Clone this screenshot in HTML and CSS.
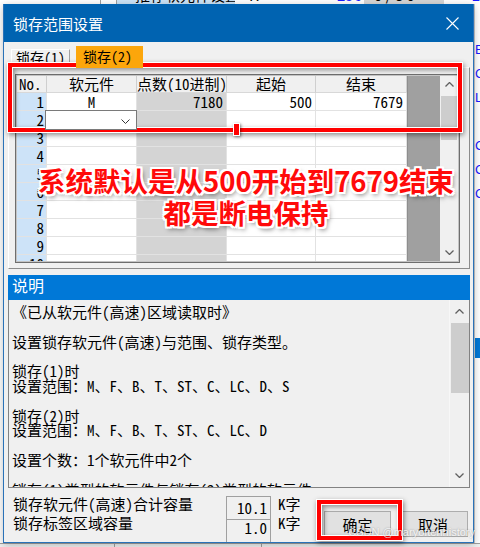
FILE: index.html
```html
<!DOCTYPE html>
<html lang="zh-CN">
<head>
    <meta charset="UTF-8">
    <title>锁存范围设置</title>
    <link rel="stylesheet" href="styles.css">
</head>
<body>
<div class="screen">
    <!-- Application behind the dialog -->
    <div class="app">
        <div class="app-top">
            <div class="cell c1"></div>
            <div class="cell c2"></div>
            <div class="cell c3">推荐软元件设置</div>
            <div class="cell c4">K</div>
            <div class="cell c5">256</div>
            <div class="cell c6">0 / 8 0</div>
            <div class="cell c7">E</div>
        </div>
        <div class="app-main">
            <div class="app-left"></div>
            <div class="app-right">
                <div class="frag">E</div>
                <div class="frag">C</div>
                <div class="frag">L</div>
                <div class="frag"></div>
                <div class="frag">C</div>
                <div class="frag">C</div>
                <div class="frag">C</div>
                <div class="app-bar"></div>
            </div>
        </div>
        <div class="app-bottom">
            <div class="cell b1"></div>
            <div class="cell b2">检索(K)</div>
            <div class="cell b3">顺序检索(H)</div>
        </div>
    </div>

    <!-- Dialog -->
    <div class="dialog">
        <div class="titlebar">
            <span class="title">锁存范围设置</span>
            <span class="close">
                <svg width="13" height="13" viewBox="0 0 13 13"><path d="M0.5 0.5 L12.5 12.5 M12.5 0.5 L0.5 12.5" stroke="#fff" stroke-width="1.1" fill="none"/></svg>
            </span>
        </div>

        <div class="dialog-body">
            <div class="tabs">
                <div class="tab">锁存(1)</div>
                <div class="tab active">锁存(2)</div>
            </div>

            <div class="panel">
                <div class="grid">
                    <div class="sheet">
                        <div class="c h hno">No.</div>
                        <div class="c h">软元件</div>
                        <div class="c h">点数(10进制)</div>
                        <div class="c h">起始</div>
                        <div class="c h">结束</div>

                        <div class="c n">1</div>
                        <div class="c ctr">M</div>
                        <div class="c g r">7180</div>
                        <div class="c r">500</div>
                        <div class="c r">7679</div>

                        <div class="c n">2</div>
                        <div class="c edit">
                            <div class="combo">
                                <svg width="9" height="5" viewBox="0 0 9 5"><path d="M0.5 0.5 L4.5 4.5 L8.5 0.5" stroke="#333" stroke-width="1" fill="none"/></svg>
                            </div>
                        </div>
                        <div class="c g"></div><div class="c"></div><div class="c"></div>

                        <div class="c n">3</div><div class="c"></div><div class="c g"></div><div class="c"></div><div class="c"></div>
                        <div class="c n">4</div><div class="c"></div><div class="c g"></div><div class="c"></div><div class="c"></div>
                        <div class="c n">5</div><div class="c"></div><div class="c g"></div><div class="c"></div><div class="c"></div>
                        <div class="c n">6</div><div class="c"></div><div class="c g"></div><div class="c"></div><div class="c"></div>
                        <div class="c n">7</div><div class="c"></div><div class="c g"></div><div class="c"></div><div class="c"></div>
                        <div class="c n">8</div><div class="c"></div><div class="c g"></div><div class="c"></div><div class="c"></div>
                        <div class="c n">9</div><div class="c"></div><div class="c g"></div><div class="c"></div><div class="c"></div>
                        <div class="c n">10</div><div class="c"></div><div class="c g"></div><div class="c"></div><div class="c"></div>
                    </div>
                    <div class="dark-col"></div>
                    <div class="vscroll">
                        <div class="arrow">
                            <svg width="9" height="5" viewBox="0 0 9 5"><path d="M0.5 4.5 L4.5 0.5 L8.5 4.5" stroke="#606060" stroke-width="1.3" fill="none"/></svg>
                        </div>
                        <div class="thumb"></div>
                        <div class="track"></div>
                        <div class="arrow">
                            <svg width="9" height="5" viewBox="0 0 9 5"><path d="M0.5 0.5 L4.5 4.5 L8.5 0.5" stroke="#606060" stroke-width="1.3" fill="none"/></svg>
                        </div>
                    </div>
                </div>
            </div>

            <!-- Description -->
            <div class="desc-head">说明</div>
            <div class="desc-box">
                <div class="desc-text">《已从软元件(高速)区域读取时》

设置锁存软元件(高速)与范围、锁存类型。

锁存(1)时
设置范围：M、F、B、T、ST、C、LC、D、S

锁存(2)时
设置范围：M、F、B、T、ST、C、LC、D

设置个数：1个软元件中2个

锁存(1)类型的软元件与锁存(2)类型的软元件</div>
                <div class="vscroll wide">
                    <div class="arrow tall">
                        <svg width="9" height="5" viewBox="0 0 9 5"><path d="M0.5 4.5 L4.5 0.5 L8.5 4.5" stroke="#606060" stroke-width="1.3" fill="none"/></svg>
                    </div>
                    <div class="thumb long"></div>
                    <div class="track"></div>
                    <div class="arrow tall">
                        <svg width="9" height="5" viewBox="0 0 9 5"><path d="M0.5 0.5 L4.5 4.5 L8.5 0.5" stroke="#606060" stroke-width="1.3" fill="none"/></svg>
                    </div>
                </div>
            </div>

            <!-- Capacity and buttons -->
            <div class="footer">
                <div class="cap-labels">
                    <div>锁存软元件(高速)合计容量</div>
                    <div>锁存标签区域容量</div>
                </div>
                <div class="cap-box">
                    <div class="cap-v first">10.1</div>
                    <div class="cap-v">1.0</div>
                </div>
                <div class="cap-unit">
                    <div>K字</div>
                    <div>K字</div>
                </div>
                <button class="btn">确定</button>
                <button class="btn cancel">取消</button>
            </div>
        </div>

        <!-- Annotations drawn over the screenshot -->
        <div class="mark mark-table"></div>
        <div class="mark-handle"></div>
        <div class="note">系统默认是从500开始到7679结束<br>都是断电保持</div>
        <div class="mark mark-ok"></div>
    </div>

    <div class="watermark">CSDN @maryoftenhistory</div>
</div>
</body>
</html>
```

FILE: styles.css
```css
* {
    box-sizing: border-box;
}

body {
    margin: 0;
    width: 480px;
    height: 547px;
    overflow: hidden;
    background: #fff;
    color: #000;
    font-family: "Noto Sans Mono CJK SC", "Noto Sans CJK SC", monospace;
    font-size: 15px;
}

.screen {
    position: relative;
    width: 480px;
    height: 547px;
}

/* Background application */
.app {
    display: flex;
    flex-direction: column;
    width: 480px;
    height: 547px;
    background: #fff;
}

.app-top {
    height: 4px;
    display: flex;
    align-items: flex-end;
    overflow: hidden;
    font-family: "Noto Sans CJK SC", sans-serif;
    line-height: 18px;
}

.cell {
    flex: none;
    height: 18px;
    white-space: nowrap;
    overflow: hidden;
}

.app-top .c1 { width: 100px; }
.app-top .c2 { width: 17px; border-left: 1px solid #a0a0a0; border-right: 1px solid #a0a0a0; }
.app-top .c3 { width: 118px; background: #cce4f7; padding-left: 18px; }
.app-top .c4 { width: 100px; padding-left: 14px; }
.app-top .c5 { width: 27px; color: #1a1aff; text-align: right; }
.app-top .c6 { width: 80px; background: #d6d6d6; padding-left: 10px; margin-left: 2px; }
.app-top .c7 { flex: 1; color: #1a1aff; text-align: right; }

.app-main {
    flex: 1;
    display: flex;
}

.app-left {
    width: 474px;
}

.app-right {
    width: 6px;
    padding-top: 34px;
    border-left: 1px solid #c8c8c8;
    overflow: hidden;
    color: #1a1aff;
    font-family: "Liberation Sans", sans-serif;
    font-size: 13px;
}

.frag {
    height: 24px;
    line-height: 24px;
}

.app-bar {
    margin-top: 132px;
    height: 20px;
    background: #0078d7;
    box-shadow: 0 -8px 0 -6px #a0a0a0;
}

.app-bottom {
    height: 4px;
    display: flex;
    overflow: hidden;
    background: #f0f0f0;
    border-top: 1px solid #a0a0a0;
    font-family: "Noto Sans CJK SC", sans-serif;
    line-height: 20px;
}

.app-bottom .b1 { width: 115px; border-right: 1px solid #a0a0a0; }
.app-bottom .b2 { width: 147px; padding-left: 38px; border-right: 1px solid #a0a0a0; }
.app-bottom .b3 { flex: 1; padding-left: 48px; }

/* Dialog window */
.dialog {
    position: absolute;
    left: 3px;
    top: 4px;
    width: 471px;
    height: 539px;
    display: flex;
    flex-direction: column;
    border: 1px solid #2a72b8;
    border-top: 0;
    box-shadow: 0 2px 8px rgba(0, 0, 0, 0.25);
}

.titlebar {
    height: 38px;
    flex: none;
    display: flex;
    align-items: center;
    justify-content: space-between;
    background: #0063b1;
}

.title {
    padding-left: 9px;
    color: #fff;
    font-family: "Noto Sans CJK SC", sans-serif;
    font-size: 15px;
}

.close {
    width: 41px;
    height: 38px;
    display: flex;
    align-items: center;
    justify-content: center;
}

.dialog-body {
    flex: 1;
    display: flex;
    flex-direction: column;
    padding: 4px 3px 0 4px;
    background: #f0f0f0;
}

/* Tabs */
.tabs {
    height: 21px;
    flex: none;
    display: flex;
    align-items: flex-end;
    padding-left: 3px;
    font-size: 14px;
}

.tab {
    flex: none;
    width: 59px;
    height: 18px;
    padding-left: 4px;
    border: 1px solid;
    border-color: #fff #a0a0a0 transparent #fff;
    line-height: 15px;
    white-space: nowrap;
}

.tab.active {
    position: relative;
    z-index: 1;
    width: 67px;
    height: 22px;
    margin-left: 6px;
    margin-bottom: -1px;
    padding-left: 6px;
    background: #fca60b;
    border-color: #fca60b;
    line-height: 19px;
}

.panel {
    height: 202px;
    flex: none;
    padding: 6px 0 0 6px;
    border: 1px solid;
    border-color: #fff #8c8c8c #8c8c8c #fff;
}

/* Table grid */
.grid {
    width: 445px;
    height: 189px;
    display: flex;
    padding: 1px;
    border: 1px solid #6e6e6e;
    background: #c4c4c4;
}

.sheet {
    width: 390px;
    height: 185px;
    overflow: hidden;
    display: grid;
    grid-template-columns: 30px 90px 90px 89px 91px;
    grid-template-rows: 17px;
    grid-auto-rows: 18px;
    background: #fff;
}

.c {
    padding: 0 3px;
    border-right: 1px solid #e2e2e2;
    border-bottom: 1px solid #e2e2e2;
    line-height: 17px;
    white-space: nowrap;
    overflow: hidden;
}

.h {
    background: #f0f0f0;
    text-align: center;
    padding: 0;
    border-right-color: #cfcfcf;
    border-bottom-color: #d8d8d8;
    line-height: 16px;
}

.hno {
    text-align: left;
    padding-left: 2px;
}

.n {
    background: #cde3f8;
    text-align: right;
    padding-right: 2px;
}

.g {
    background: #d4d4d4;
}

.r {
    text-align: right;
}

.ctr {
    text-align: center;
}

.edit {
    position: relative;
    overflow: visible;
}

.combo {
    position: absolute;
    z-index: 1;
    left: -2px;
    top: -1px;
    width: 92px;
    height: 20px;
    display: flex;
    align-items: center;
    justify-content: flex-end;
    padding: 2px 6px 0 0;
    background: #fff;
    border: 1px solid #7a7a7a;
}

.dark-col {
    width: 33px;
    background: #a0a0a0;
    border-left: 1px solid #8e8e8e;
}

.vscroll {
    width: 18px;
    display: flex;
    flex-direction: column;
    align-items: center;
    background: #f0f0f0;
}

.arrow {
    height: 17px;
    width: 100%;
    display: flex;
    align-items: center;
    justify-content: center;
}

.thumb {
    width: 16px;
    height: 44px;
    margin-top: 3px;
    background: #cdcdcd;
}

.track {
    flex: 1;
}

/* Description */
.desc-head {
    height: 25px;
    flex: none;
    margin-top: 6px;
    padding-left: 4px;
    background: #0078d7;
    color: #fff;
    font-family: "Noto Sans CJK SC", sans-serif;
    font-size: 16px;
    line-height: 21px;
}

.desc-box {
    height: 188px;
    flex: none;
    display: flex;
    border: 1px solid #828282;
    border-top: 0;
    background: #f0f0f0;
}

.desc-text {
    flex: 1;
    padding: 5px 0 0 3px;
    line-height: 14.8px;
    white-space: pre;
    overflow: hidden;
}

.vscroll.wide {
    width: 20px;
    border-left: 1px solid #f7f7f7;
}

.arrow.tall {
    height: 23px;
}

.thumb.long {
    width: 18px;
    height: 70px;
    margin-top: 0;
}

/* Footer */
.footer {
    flex: 1;
    display: flex;
    align-items: flex-start;
}

.cap-labels {
    width: 218px;
    padding: 6px 0 0 5px;
    line-height: 19px;
    white-space: nowrap;
}

.cap-box {
    width: 45px;
    height: 46px;
    margin-top: 8px;
    border: 1px solid #a0a0a0;
    border-bottom: 0;
    background: #f0f0f0;
}

.cap-v {
    padding-right: 3px;
    text-align: right;
    line-height: 15px;
}

.cap-v.first {
    height: 23px;
    line-height: 22px;
    border-bottom: 1px solid #a0a0a0;
}

.cap-unit {
    width: 53px;
    padding: 6px 0 0 7px;
    line-height: 19px;
}

.btn {
    width: 67px;
    height: 26px;
    margin: 23px 0 0 0;
    padding: 0;
    background: #e1e1e1;
    border: 1px solid #adadad;
    font-family: "Noto Sans CJK SC", sans-serif;
    font-size: 15px;
    color: #000;
}

.btn.cancel {
    width: 70px;
    margin-left: 7px;
}

/* Annotations */
.mark {
    position: absolute;
    border: 4px solid #ff0000;
    box-shadow: 0 0 0 1px #fff, 1px 2px 5px 1px rgba(0, 0, 0, 0.45), inset 0 0 0 1px #fff, inset 2px 2px 5px 1px rgba(0, 0, 0, 0.4);
}

.mark-table {
    left: 4px;
    top: 59px;
    width: 454px;
    height: 69px;
}

.mark-ok {
    left: 313px;
    top: 496px;
    width: 85px;
    height: 40px;
}

.mark-handle {
    position: absolute;
    left: 229px;
    top: 119px;
    width: 7px;
    height: 13px;
    background: #ff0000;
    border: 1px solid #fff;
    box-shadow: 1px 1px 3px rgba(0, 0, 0, 0.5);
}

.note {
    position: absolute;
    left: 0;
    top: 160px;
    width: 469px;
    padding-left: 15px;
    text-align: center;
    color: #ff0a0a;
    font-family: "Noto Sans CJK SC", sans-serif;
    font-size: 27.5px;
    font-weight: 700;
    line-height: 32px;
    white-space: nowrap;
    text-shadow: -2px -2px 0 #fff, 2px -2px 0 #fff, -2px 2px 0 #fff, 2px 2px 0 #fff,
        0 -2px 0 #fff, 0 2px 0 #fff, -2px 0 0 #fff, 2px 0 0 #fff,
        2px 3px 5px rgba(0, 0, 0, 0.6);
}

.watermark {
    position: absolute;
    right: 5px;
    top: 526px;
    color: rgba(255, 255, 255, 0.85);
    font-family: "Liberation Sans", sans-serif;
    font-size: 11px;
    text-shadow: 0 0 2px rgba(0, 0, 0, 0.35);
}
```
